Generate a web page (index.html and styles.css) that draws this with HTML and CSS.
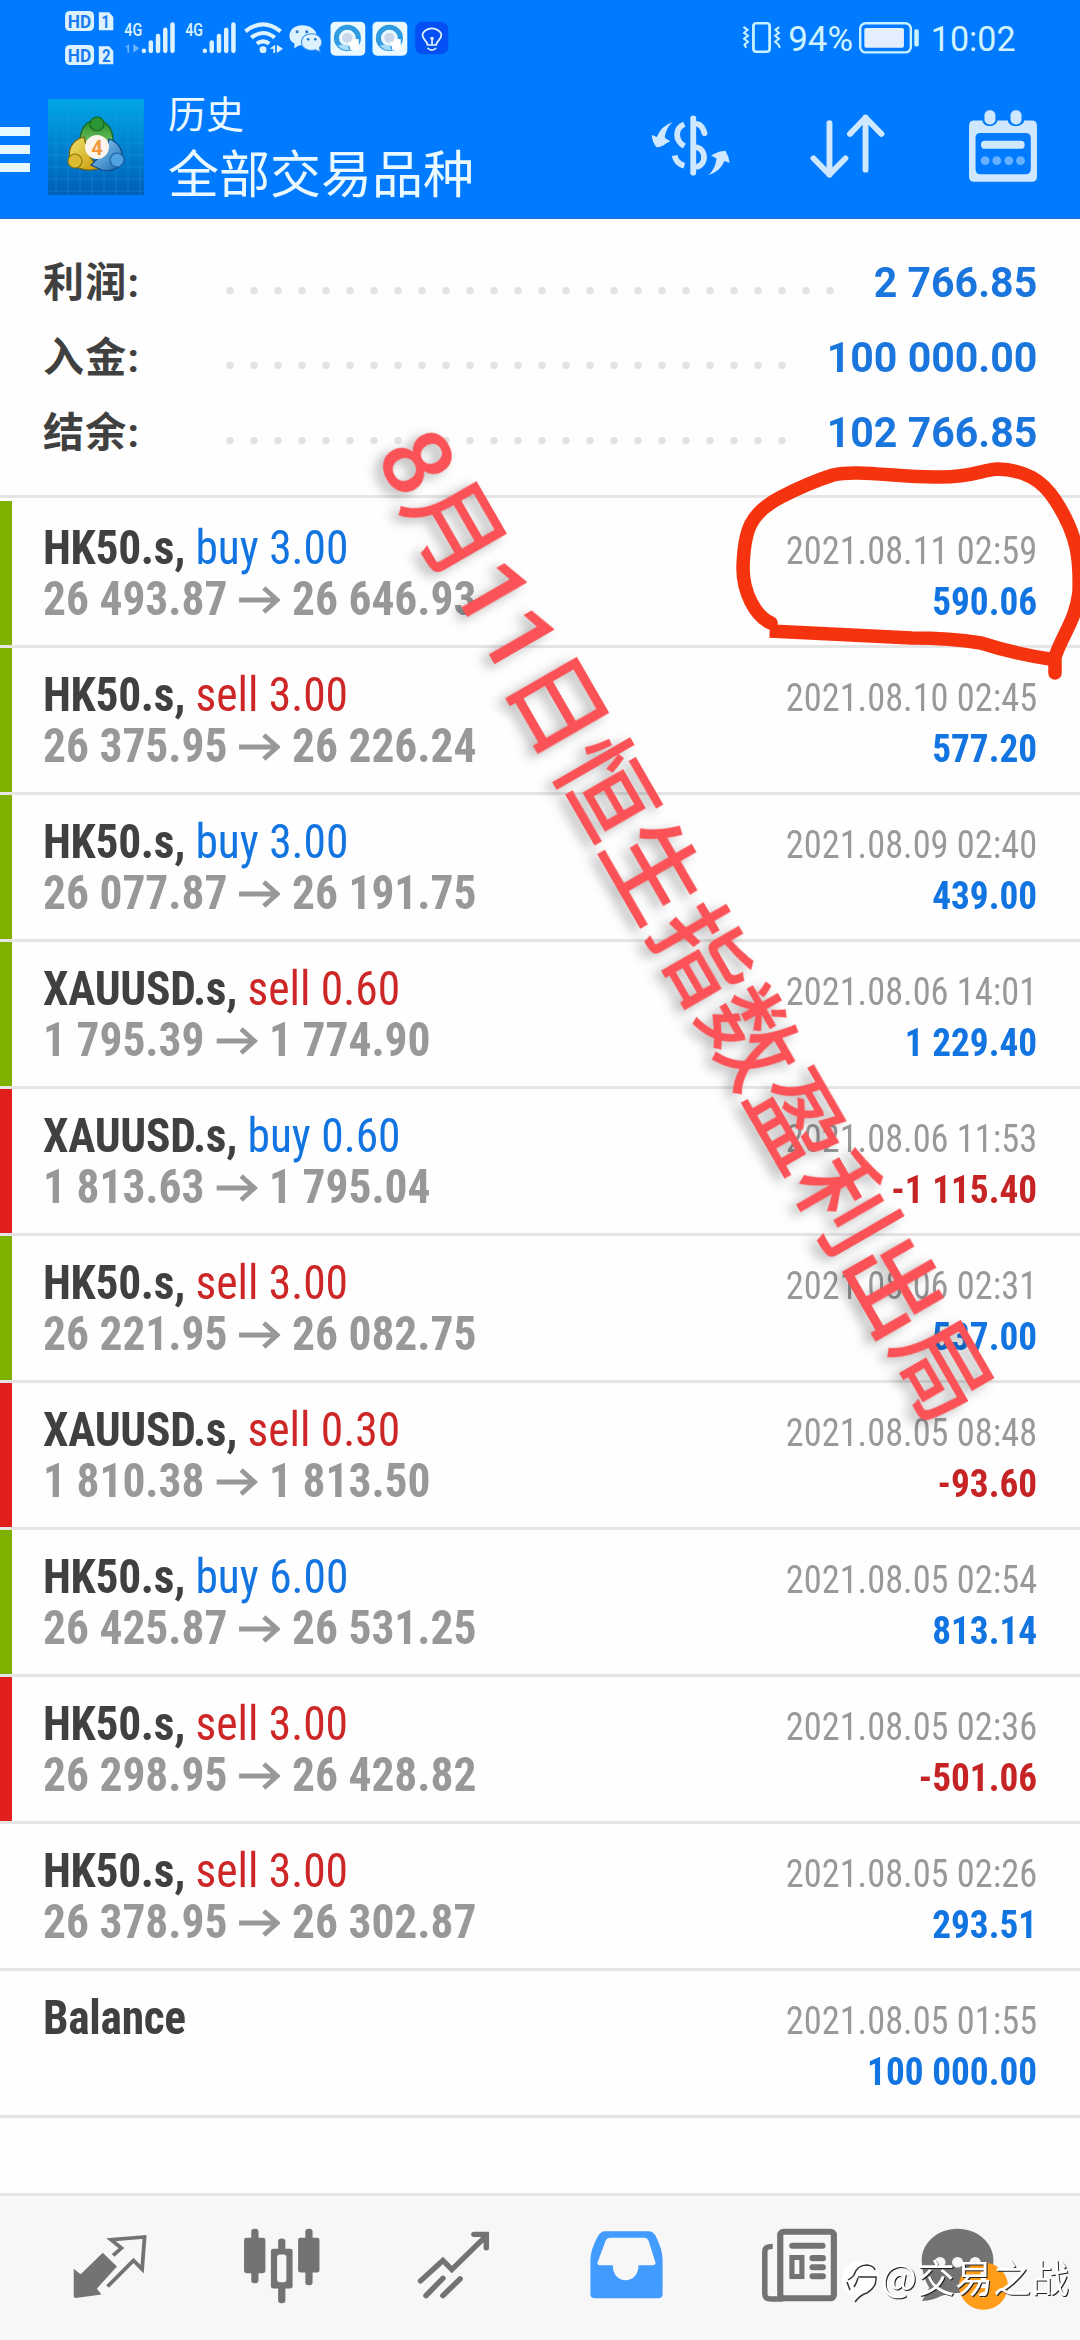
FILE: index.html
```html
<!DOCTYPE html>
<html lang="zh-CN">
<head>
<meta charset="utf-8">
<title>历史</title>
<link rel="stylesheet" href="styles.css">
</head>
<body>
<svg class="defs" width="0" height="0">
  <symbol id="arrow" viewBox="0 0 42 28" preserveAspectRatio="none"><path d="M0 14H39M25 2L38.500 14L25 26" fill="none" stroke="currentColor" stroke-width="4.800"/></symbol>
</svg>
<div class="screen">
  <header class="header">
    <div class="status">
      <svg class="status-left" viewBox="180 26 1130 174" preserveAspectRatio="none">
        <g fill="#dcf3ff">
          <rect x="189" y="32" width="84" height="60" rx="14"/><path d="M287 36h30l12 14v40h-42z"/>
          <rect x="189" y="134" width="84" height="60" rx="14"/><path d="M287 138h30l12 14v40h-42z"/>
        </g>
        <g class="st-bold" fill="#1a7cf0" font-size="54">
          <text x="197" y="82" textLength="68" lengthAdjust="spacingAndGlyphs">HD</text><text x="295" y="83" textLength="24" lengthAdjust="spacingAndGlyphs">1</text>
          <text x="197" y="184" textLength="68" lengthAdjust="spacingAndGlyphs">HD</text><text x="296" y="185" textLength="25" lengthAdjust="spacingAndGlyphs">2</text>
        </g>
        <g class="st-mid" fill="#dcf3ff" font-size="56">
          <text x="361" y="107" textLength="52" lengthAdjust="spacingAndGlyphs">4G</text>
          <text x="538" y="107" textLength="52" lengthAdjust="spacingAndGlyphs">4G</text>
        </g>
        <path d="M363 141l12-10v26h-5v-16zM387 130v27l17-13z" fill="#69b4ff"/>
        <g stroke="#dcf3ff" stroke-width="13" stroke-linecap="round">
          <path d="M418 151v1M438 126v26M459 107v45M480 88v64M501 72v80"/>
          <path d="M595 151v1M615 126v26M636 107v45M657 88v64M678 72v80"/>
        </g>
        <g fill="none" stroke="#dcf3ff" stroke-width="12"><path d="M713 93q51-42 102 0M730 112q34-28 68 0M746 130q18-14 36 0"/></g>
        <circle cx="764" cy="148" r="10" fill="#dcf3ff"/><path d="M783 145l16-12v25h-5v-13zM804 133v25l18-13z" fill="#dcf3ff"/>
        <path d="M878 75c-42 0-47 45-22 55l-2 14 16-9c40 6 58-20 46-42q-12-18-38-18z" fill="#dcf3ff"/>
        <circle cx="863" cy="94" r="4.500" fill="#2377c5"/><circle cx="891" cy="94" r="4.500" fill="#2377c5"/>
        <path d="M905 100c-36 0-39 42-9 49q11 2 20-1l14 7-2-13c15-17 2-42-23-42z" fill="#dcf3ff" stroke="#338ef0" stroke-width="3"/>
        <circle cx="895" cy="117" r="4" fill="#2377c5"/><circle cx="916" cy="117" r="4" fill="#2377c5"/>
        <g id="browser"><rect x="960" y="64" width="101" height="102" rx="14" fill="#eaf8ff"/><circle cx="1009" cy="113" r="32" fill="none" stroke="#2f9be0" stroke-width="15"/><path d="M981 134a34 34 0 0 0 34 15l-6-16z" fill="#a9dcf5"/><path d="M1008 113l34 4v29l-16 6z" fill="#fff"/><circle cx="1009" cy="113" r="15" fill="#c8d8ec"/><path d="M1012 122l30 22-24 6z" fill="#fff"/></g>
        <use href="#browser" x="122"/>
        <rect x="1206" y="64" width="96" height="98" rx="22" fill="#0450f5"/>
        <path d="M1242 134c0-12-15-15-15-31a28 23 0 0 1 55 0c0 16-15 19-15 31zM1242 143q12 13 25 0M1255 133v-22" fill="none" stroke="#e2f4ff" stroke-width="5"/><circle cx="1255" cy="114" r="5" fill="#e2f4ff"/>
      </svg>
      <svg class="status-right" viewBox="580 41 810 142" preserveAspectRatio="none">
        <g fill="none" stroke="#c8f2ff"><rect x="619" y="69" width="47" height="86" rx="8" stroke-width="8"/><path d="M590 80l12 9-10 9 11 9-11 9 11 9-10 9 5 9M694 80l-11 9 10 9-11 9 11 9-11 9 10 9 4 9" stroke-width="6"/>
        <rect x="929" y="69" width="147" height="88" rx="16" stroke-width="7"/></g>
        <rect x="941" y="83" width="115" height="60" rx="5" fill="#e3eeff"/><rect x="1086" y="87" width="13" height="52" rx="5" fill="#c8f2ff"/>
        <g class="st-reg" fill="#d0f3ff" font-size="106"><text x="720" y="154" textLength="188" lengthAdjust="spacingAndGlyphs">94%</text><text x="1134" y="154" textLength="246" lengthAdjust="spacingAndGlyphs">10:02</text></g>
      </svg>
    </div>
    <div class="toolbar">
      <div class="menu"><i></i><i></i><i></i></div>
      <svg class="logo" viewBox="0 0 96 96">
        <defs>
          <linearGradient id="bg" x1="0" y1="0" x2="0" y2="1"><stop offset="0" stop-color="#00a5e6"/><stop offset="1" stop-color="#005fb8"/></linearGradient>
          <linearGradient id="gr" x1="0" y1="0" x2="0" y2="1"><stop offset="0" stop-color="#1f8c2c"/><stop offset="1" stop-color="#8ed06c"/></linearGradient>
          <linearGradient id="ye" x1="0" y1="0" x2="1" y2="1"><stop offset="0" stop-color="#f0e36c"/><stop offset="1" stop-color="#c99a08"/></linearGradient>
          <linearGradient id="bl" x1="0" y1="0" x2="1" y2="1"><stop offset="0" stop-color="#9ad6f5"/><stop offset="1" stop-color="#1568b5"/></linearGradient>
        </defs>
        <rect width="96" height="96" fill="url(#bg)"/>
        <path d="M8 0v96M20 0v96M32 0v96M44 0v96M56 0v96M68 0v96M80 0v96M92 0v96M0 8h96M0 20h96M0 32h96M0 44h96M0 56h96M0 68h96M0 80h96M0 92h96" stroke="#25a4e8" stroke-width=".6" opacity=".5"/>
        <g stroke-width="1.200">
          <path d="M32 42C32 14 65 14 65 42L60 51L38 46z" fill="url(#gr)" stroke="#17661c"/>
          <path d="M36 38C16 42 15 72 42 71L50 70L40 54z" fill="url(#ye)" stroke="#76600b"/>
          <path d="M61 40C80 46 80 76 54 71L43 66L58 52z" fill="url(#bl)" stroke="#134a86"/>
          <ellipse cx="49" cy="25" rx="7" ry="7" fill="#2b9434" stroke="#17661c"/>
          <circle cx="27" cy="62" r="7" fill="#dbbd34" stroke="#8f760e"/>
          <circle cx="69" cy="61" r="7" fill="#4fa3e0" stroke="#1c5e9d"/>
        </g>
        <circle cx="49" cy="48" r="12" fill="#fdf4ec"/>
        <text class="st-bold" x="49" y="55.500" font-size="20" text-anchor="middle" fill="#f09a3c">4</text>
      </svg>
      <div class="titles"><div class="title-small">历史</div><div class="title-big">全部交易品种</div></div>
      <svg class="ic-dollar" viewBox="318 340 236 190" preserveAspectRatio="none">
        <g fill="none" stroke="#cfe7ff" stroke-linecap="round" stroke-width="17">
          <path d="M444 353v164"/><path d="M456 370q15 4 21 28" /><path d="M456 441c26 8 26 50 0 58"/>
          <path d="M418 371c-28 12-28 49 0 66M390 465q4 24 28 31" stroke-linecap="butt"/>
        </g>
        <g fill="#cfe7ff"><path d="M383 365q-20 20-22 47l16 10-11 6q-14 12-29 12-12-14-14-37l15 6q14-34 45-44z"/><path d="M488 524q20-17 24-50l-16-9 11-6q14-8 31-8 10 18 12 36l-15-5q-14 34-47 42z"/></g>
      </svg>
      <svg class="ic-sort" viewBox="778 340 222 198" preserveAspectRatio="none"><path d="M837 370v155M791 476l46 49 46-49M941 510V353M896 403l45-49 46 49" fill="none" stroke="#cfe7ff" stroke-width="17" stroke-linecap="round" stroke-linejoin="round"/></svg>
      <svg class="ic-cal" viewBox="1240 328 204 218" preserveAspectRatio="none">
        <path fill="#cfe7ff" fill-rule="evenodd" d="M1258 362h24c2 22 40 22 44 0h30c2 22 44 22 48 0h22q15 0 15 16v152q0 15-15 15h-168q-15 0-15-15V378q0-16 15-16zM1276 400q-14 0-14 14v94q0 15 14 15h131q16 0 16-15v-94q0-14-16-14z"/>
        <rect x="1288" y="332" width="32" height="42" rx="15" fill="#cfe7ff"/><rect x="1364" y="332" width="32" height="42" rx="15" fill="#cfe7ff"/>
        <rect x="1278" y="423" width="127" height="24" rx="11" fill="#cfe7ff"/>
        <g fill="#66b0ff"><circle cx="1290" cy="482" r="13"/><circle cx="1324" cy="482" r="13"/><circle cx="1359" cy="482" r="13"/><circle cx="1393" cy="482" r="13"/></g>
      </svg>
    </div>
  </header>

  <section class="summary">
    <div class="sum"><span class="sum-label">利润:</span><span class="dots dots-long"></span><span class="sum-value">2 766.85</span></div>
    <div class="sum"><span class="sum-label">入金:</span><span class="dots"></span><span class="sum-value">100 000.00</span></div>
    <div class="sum"><span class="sum-label">结余:</span><span class="dots"></span><span class="sum-value">102 766.85</span></div>
  </section>

  <main class="deals">
    <div class="deal win first"><div class="left"><div><b>HK50.s,</b> <span class="buy">buy 3.00</span></div><div class="price">26 493.87 <svg class="arr"><use href="#arrow"/></svg> 26 646.93</div></div><div class="right"><div class="date">2021.08.11 02:59</div><div class="pl">590.06</div></div></div>
    <div class="deal win"><div class="left"><div><b>HK50.s,</b> <span class="sell">sell 3.00</span></div><div class="price">26 375.95 <svg class="arr"><use href="#arrow"/></svg> 26 226.24</div></div><div class="right"><div class="date">2021.08.10 02:45</div><div class="pl">577.20</div></div></div>
    <div class="deal win"><div class="left"><div><b>HK50.s,</b> <span class="buy">buy 3.00</span></div><div class="price">26 077.87 <svg class="arr"><use href="#arrow"/></svg> 26 191.75</div></div><div class="right"><div class="date">2021.08.09 02:40</div><div class="pl">439.00</div></div></div>
    <div class="deal win"><div class="left"><div><b>XAUUSD.s,</b> <span class="sell">sell 0.60</span></div><div class="price">1 795.39 <svg class="arr"><use href="#arrow"/></svg> 1 774.90</div></div><div class="right"><div class="date">2021.08.06 14:01</div><div class="pl">1 229.40</div></div></div>
    <div class="deal loss"><div class="left"><div><b>XAUUSD.s,</b> <span class="buy">buy 0.60</span></div><div class="price">1 813.63 <svg class="arr"><use href="#arrow"/></svg> 1 795.04</div></div><div class="right"><div class="date">2021.08.06 11:53</div><div class="pl neg">-1 115.40</div></div></div>
    <div class="deal win"><div class="left"><div><b>HK50.s,</b> <span class="sell">sell 3.00</span></div><div class="price">26 221.95 <svg class="arr"><use href="#arrow"/></svg> 26 082.75</div></div><div class="right"><div class="date">2021.08.06 02:31</div><div class="pl">537.00</div></div></div>
    <div class="deal loss"><div class="left"><div><b>XAUUSD.s,</b> <span class="sell">sell 0.30</span></div><div class="price">1 810.38 <svg class="arr"><use href="#arrow"/></svg> 1 813.50</div></div><div class="right"><div class="date">2021.08.05 08:48</div><div class="pl neg">-93.60</div></div></div>
    <div class="deal win"><div class="left"><div><b>HK50.s,</b> <span class="buy">buy 6.00</span></div><div class="price">26 425.87 <svg class="arr"><use href="#arrow"/></svg> 26 531.25</div></div><div class="right"><div class="date">2021.08.05 02:54</div><div class="pl">813.14</div></div></div>
    <div class="deal loss"><div class="left"><div><b>HK50.s,</b> <span class="sell">sell 3.00</span></div><div class="price">26 298.95 <svg class="arr"><use href="#arrow"/></svg> 26 428.82</div></div><div class="right"><div class="date">2021.08.05 02:36</div><div class="pl neg">-501.06</div></div></div>
    <div class="deal"><div class="left"><div><b>HK50.s,</b> <span class="sell">sell 3.00</span></div><div class="price">26 378.95 <svg class="arr"><use href="#arrow"/></svg> 26 302.87</div></div><div class="right"><div class="date">2021.08.05 02:26</div><div class="pl">293.51</div></div></div>
    <div class="deal"><div class="left"><div><b>Balance</b></div></div><div class="right"><div class="date">2021.08.05 01:55</div><div class="pl">100 000.00</div></div></div>
  </main>

  <nav class="tabs">
    <svg class="t1" viewBox="210 145 220 230" preserveAspectRatio="none"><path d="M299 219l41 41-58 66 13 18-74 10q-6 0-6-6v-81l20 16z" fill="#737373"/><path d="M329 227l24-22-30-25 97-8-7 96-25-26-75 78" fill="none" stroke="#737373" stroke-width="11"/></svg>
    <svg class="t2" viewBox="705 145 225 230" preserveAspectRatio="none"><g fill="#737373"><rect x="708" y="174" width="62" height="106" rx="7"/><rect x="729" y="147" width="21" height="163" rx="9"/><rect x="865" y="174" width="62" height="104" rx="7"/><rect x="886" y="147" width="21" height="169" rx="9"/><rect x="786" y="207" width="63" height="119" rx="7"/><rect x="807" y="176" width="21" height="194" rx="9"/></g><rect x="804" y="224" width="27" height="83" rx="8" fill="#f7f7f7"/></svg>
    <svg class="t3" viewBox="1205 145 225 230" preserveAspectRatio="none"><path d="M1221 303l65-61 26 27 99-100M1376 164h36v40M1237 347l49-52M1286 347l50-50" fill="none" stroke="#737373" stroke-width="16" stroke-linecap="round"/></svg>
    <svg class="t4" viewBox="140 145 224 230" preserveAspectRatio="none"><path fill="#429bff" fill-rule="evenodd" d="M190 155h126q14 0 21 14 20 42 20 70v104q0 12-13 12H160q-13 0-13-12V239q0-28 22-70 8-14 21-14zM205 174q-10 0-13 7l-24 66q-3 9 6 9h38c0 60 75 60 75 0h41q10 0 8-9l-20-65q-3-8-12-8z"/></svg>
    <svg class="t5" viewBox="640 145 230 230" preserveAspectRatio="none"><g fill="none" stroke="#737373"><path d="M677 200q-23 0-23 14v128q0 15 18 15h35" stroke-width="16"/><rect x="699" y="156" width="156" height="199" rx="10" stroke-width="18"/><rect x="733" y="233" width="29" height="57" stroke-width="15"/><path d="M734 198h88M793 235h30M793 262h30M793 289h30" stroke-width="18" stroke-linecap="round"/></g></svg>
    <svg class="t6" viewBox="1105 145 258 250" preserveAspectRatio="none"><path d="M1214 147c58 0 104 42 104 96s-44 98-104 98q-26 0-46 8-26 14-57 16 10-20 21-40-22-36-22-82c0-54 46-96 104-96z" fill="#737373"/><g fill="#f7f7f7"><circle cx="1163" cy="248" r="16"/><circle cx="1214" cy="248" r="16"/><circle cx="1265" cy="248" r="16"/></g><circle cx="1289" cy="320" r="71" fill="#ff9c1a"/><rect x="1281" y="276" width="15" height="50" fill="#fff"/><circle cx="1288" cy="346" r="8" fill="#fff"/></svg>
  </nav>

  <svg class="overlay" viewBox="0 0 1080 2340">
    <g class="brush"><path d="M769.700 631L912 638Q950 638 981 643Q1015 654 1056 660"/><path d="M771 623C755 616 743 592 743 568C744 530 750 513 781 497Q808 483 833 475C858 469 900 478 940 477C975 477 980 470 998 469C1025 470 1042 480 1055 500C1078 535 1080 560 1079 592C1076 620 1062 635 1055 657V673"/></g>
    <text class="note" transform="translate(374 455.500) rotate(60)">8月11日恒生指数盈利出局</text>
    <g transform="translate(840 2260)" fill="none"><path d="M4 8Q12 0 22 2Q34 0 38 12Q38 26 28 33Q20 38 14 40Q16 35 20 32Q8 36 4 30Q0 18 4 8z" fill="#fff"/><path d="M8 20Q14 16 14 15Q17 5 27 5Q34 6 35 10M18 17H36Q37 27 27 33Q20 35 15 42M14 27Q17 22 18 18M7 22L10 30" stroke="#333" stroke-width="1.500"/></g>
    <text class="mark" x="881" y="2292">@交易之战</text>
  </svg>
</div>
</body>
</html>
```

FILE: styles.css
```css
* { box-sizing: border-box; }
body { margin: 0; background: #fff; font-family: Roboto, "Noto Sans CJK SC", sans-serif; }
.defs { position: absolute; }
.screen { position: relative; display: flex; flex-direction: column; width: 1080px; height: 2340px; overflow: hidden; background: #fefefe; }
svg { display: block; flex: none; }

.header { height: 219px; background: #007aff; border-bottom: 1px solid #2173c6; display: flex; flex-direction: column; }
.status { height: 75px; display: flex; justify-content: space-between; padding: 9px 61px 0 62px; }
.status-left { width: 389px; height: 58px; }
.status-right { width: 279px; height: 47px; margin-top: 5px; }
.st-bold { font-weight: 700; }
.st-mid { font-weight: 500; }
.st-reg { font-weight: 400; }

.toolbar { display: flex; height: 143px; }
.menu { width: 30px; display: flex; flex-direction: column; gap: 9.500px; padding-top: 52px; margin-right: 18px; }
.menu i { height: 8.500px; background: #e6f8ff; }
.logo { width: 96px; height: 96px; margin-top: 24px; }
.titles { width: 480px; padding: 13px 0 0 24px; color: #eaf9ff; white-space: nowrap; }
.title-small { font-size: 38px; line-height: 54px; }
.title-big { font-size: 51px; line-height: 68px; }
.ic-dollar { width: 81px; height: 63px; margin: 38.500px 0 0 25.500px; }
.ic-sort { width: 77px; height: 66px; margin: 38px 0 0 78px; }
.ic-cal { width: 70px; height: 73px; margin: 34px 0 0 82px; }

.summary { height: 279px; border-bottom: 3px solid #e5e5e5; padding: 26px 43px 0; }
.sum { display: flex; height: 75px; align-items: baseline; line-height: 75px; }
.sum-label { width: 175px; font-size: 41px; font-weight: 700; color: #404040; letter-spacing: 1.200px; }
.dots { width: 576px; height: 9px; background: radial-gradient(circle, #e2e2e2 0 3.200px, transparent 4.200px) 0 0 / 24px 9px; transform: translateY(-2px); }
.dots-long { width: 624px; }
.sum-value { margin-left: auto; font-size: 42px; font-weight: 700; color: #1a76dd; transform: scaleX(.978); transform-origin: right; }

.deal { display: flex; justify-content: space-between; align-items: baseline; height: 147px; padding: 21px 43px 0; line-height: 51px; box-shadow: inset 0 -3px #e5e5e5; font-stretch: 75%; white-space: nowrap; background: linear-gradient(var(--bar, transparent), var(--bar, transparent)) 0 0 / 12px 144px no-repeat; }
.deal.first { margin-top: 3px; }
.win { --bar: #7fb000; }
.loss { --bar: #e21f1f; }
.left { font-size: 48px; transform: scaleX(.947); transform-origin: left; }
b { color: #404040; font-weight: 700; letter-spacing: -.3px; }
.buy { color: #1274e0; }
.sell { color: #cc2626; }
.price { color: #98989b; font-weight: 700; }
.arr { display: inline-block; width: 44px; height: 28px; margin: 0 1px; vertical-align: 1px; }
.right { font-size: 39.500px; text-align: right; }
.date { color: #999; transform: scaleX(.92); transform-origin: right; }
.pl { color: #1274e0; font-weight: 700; transform: scaleX(.943); transform-origin: right; }
.pl.neg { color: #c62424; }

.tabs { margin-top: auto; height: 147px; background: #f7f7f7; border-top: 3px solid #e5e5e5; display: flex; padding: 32px 0 0 72px; }
.t1 { width: 76px; height: 77px; }
.t2 { width: 77.500px; height: 77px; margin-left: 94.500px; }
.t3 { width: 77.500px; height: 77px; margin-left: 94.500px; }
.t4 { width: 77px; height: 77px; margin-left: 96px; }
.t5 { width: 79px; height: 77px; margin-left: 95px; }
.t6 { width: 89px; height: 83px; margin-left: 81px; }

.overlay { position: absolute; inset: 0; width: 1080px; height: 2340px; }
.brush path { fill: none; stroke: #f6330f; stroke-width: 13.500; stroke-linecap: round; stroke-linejoin: round; }
.brush path:first-child { stroke-linecap: butt; }
.note { font: 500 96px Roboto, "Noto Sans CJK SC", sans-serif; fill: #fa5256; filter: drop-shadow(0 8px 6px rgba(0,0,0,.28)); }
.mark { font: 400 38px "Noto Sans CJK SC", sans-serif; fill: #fff; filter: drop-shadow(1.500px 1.500px 0 #222); }
```
